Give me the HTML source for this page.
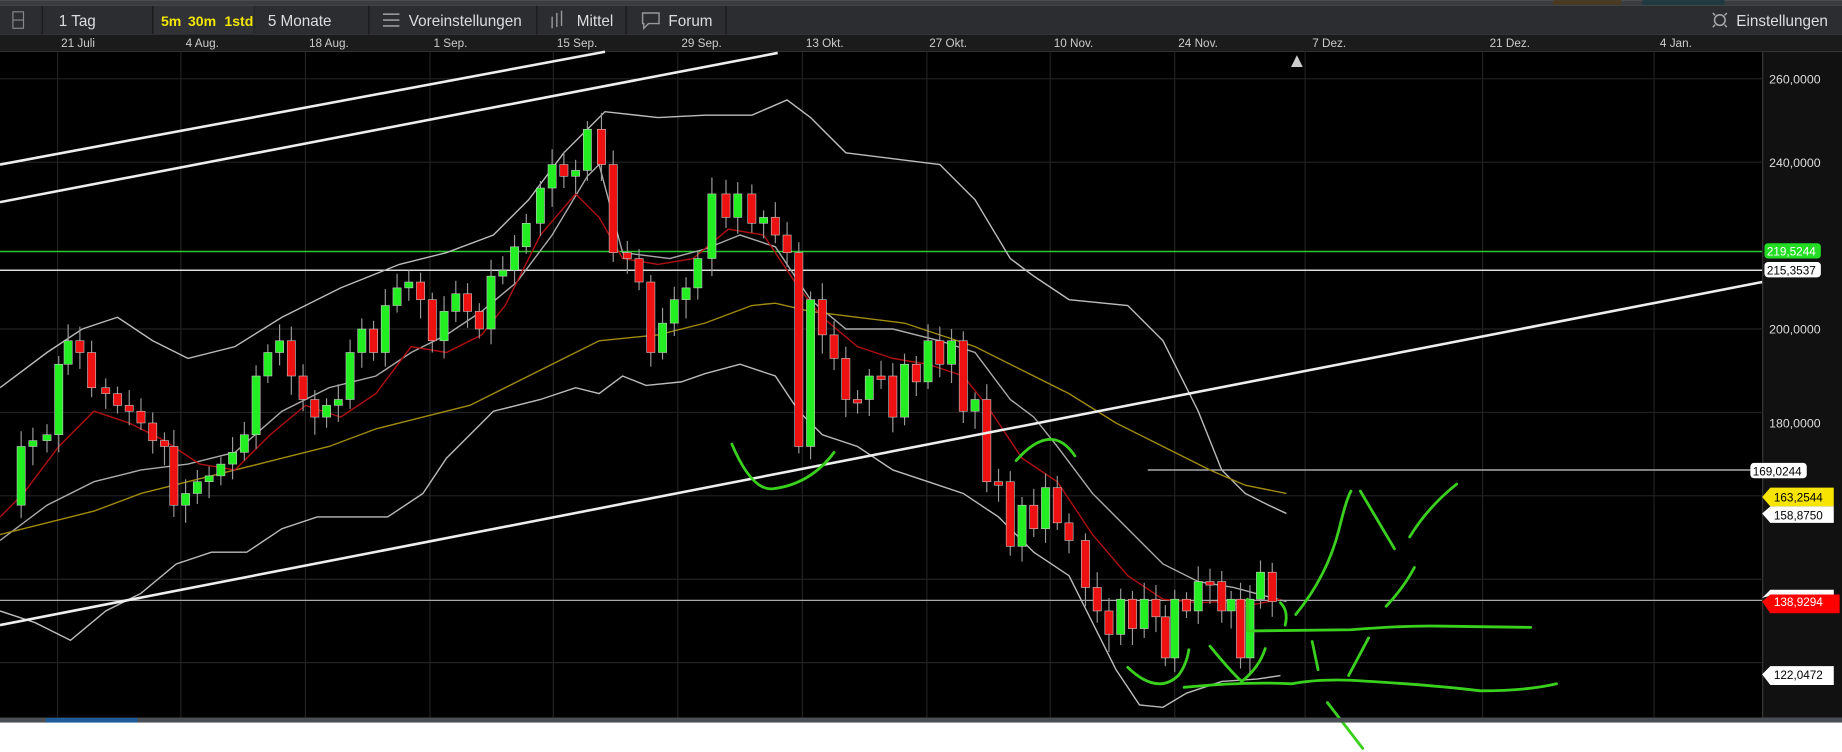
<!DOCTYPE html>
<html><head><meta charset="utf-8">
<style>
html,body{margin:0;padding:0;background:#fff;overflow:hidden}
svg{display:block}
text{font-family:"Liberation Sans Narrow","Liberation Sans",sans-serif}
</style></head><body>
<svg id="s" width="1842" height="752" viewBox="0 0 1568 640" xmlns="http://www.w3.org/2000/svg">
<rect x="0" y="0" width="1568" height="640" fill="#fff"/>
<!-- top strip -->
<rect x="0" y="0" width="1568" height="5" fill="#3a3d40"/>
<rect x="1322" y="0" width="58" height="4" fill="#4a3a22"/>
<rect x="1398" y="0" width="70" height="4" fill="#1e3a40"/>
<!-- toolbar -->
<rect x="0" y="5" width="1568" height="24" fill="#2b2d30"/>
<g stroke="#1a1a1a" stroke-width="1">
<line x1="36" y1="5" x2="36" y2="29"/><line x1="130" y1="5" x2="130" y2="29"/><line x1="216" y1="5" x2="216" y2="29"/>
<line x1="314" y1="5" x2="314" y2="29"/><line x1="457" y1="5" x2="457" y2="29"/><line x1="533" y1="5" x2="533" y2="29"/><line x1="618" y1="5" x2="618" y2="29"/>
</g>
<rect x="131" y="5" width="85" height="24" fill="#303235"/>
<g fill="none" stroke="#888" stroke-width="1"><rect x="11" y="10" width="9" height="14"/><line x1="11" y1="17" x2="20" y2="17"/></g>
<text x="50" y="22" fill="#ddd" font-size="13">1 Tag</text>
<text x="137" y="22" fill="#f2e600" font-size="12" font-weight="bold">5m</text>
<text x="160" y="22" fill="#f2e600" font-size="12" font-weight="bold">30m</text>
<text x="191" y="22" fill="#f2e600" font-size="12" font-weight="bold">1std</text>
<text x="228" y="22" fill="#ddd" font-size="13">5 Monate</text>
<g stroke="#999" stroke-width="1.3"><line x1="326" y1="12" x2="340" y2="12"/><line x1="326" y1="17" x2="340" y2="17"/><line x1="326" y1="22" x2="340" y2="22"/></g>
<text x="348" y="22" fill="#ddd" font-size="13">Voreinstellungen</text>
<g stroke="#999" stroke-width="1.2"><line x1="470" y1="14" x2="470" y2="24"/><line x1="474" y1="11" x2="474" y2="23"/><line x1="478" y1="9" x2="478" y2="22"/></g>
<text x="491" y="22" fill="#ddd" font-size="13">Mittel</text>
<path d="M547 11h14v9h-9l-4 4v-4h-1z" fill="none" stroke="#999" stroke-width="1.2"/>
<text x="569" y="22" fill="#ddd" font-size="13">Forum</text>
<circle cx="1464" cy="17" r="4.5" fill="none" stroke="#aaa" stroke-width="1.3"/>
<g stroke="#aaa" stroke-width="1.2"><line x1="1458" y1="11" x2="1460" y2="13"/><line x1="1470" y1="11" x2="1468" y2="13"/><line x1="1458" y1="23" x2="1460" y2="21"/><line x1="1470" y1="23" x2="1468" y2="21"/></g>
<text x="1478" y="22" fill="#ddd" font-size="13">Einstellungen</text>
<!-- date axis -->
<rect x="0" y="29" width="1568" height="15" fill="#1b1b1b"/>
<g fill="#ccc" font-size="10">
<text x="52" y="40">21 Juli</text><text x="158" y="40">4 Aug.</text><text x="263" y="40">18 Aug.</text><text x="369" y="40">1 Sep.</text>
<text x="474" y="40">15 Sep.</text><text x="580" y="40">29 Sep.</text><text x="686" y="40">13 Okt.</text><text x="791" y="40">27 Okt.</text>
<text x="897" y="40">10 Nov.</text><text x="1003" y="40">24 Nov.</text><text x="1117" y="40">7 Dez.</text><text x="1268" y="40">21 Dez.</text><text x="1413" y="40">4 Jan.</text>
</g>
<!-- chart area -->
<rect x="0" y="44" width="1500" height="567" fill="#000"/>
<rect x="1500" y="44" width="68" height="567" fill="#111"/>
<line x1="1500.5" y1="44" x2="1500.5" y2="611" stroke="#333"/>
<g stroke="#222" stroke-width="1">
<line x1="49" y1="44" x2="49" y2="611"/><line x1="154" y1="44" x2="154" y2="611"/><line x1="260" y1="44" x2="260" y2="611"/><line x1="366" y1="44" x2="366" y2="611"/>
<line x1="471" y1="44" x2="471" y2="611"/><line x1="577" y1="44" x2="577" y2="611"/><line x1="683" y1="44" x2="683" y2="611"/><line x1="789" y1="44" x2="789" y2="611"/>
<line x1="894" y1="44" x2="894" y2="611"/><line x1="1000" y1="44" x2="1000" y2="611"/><line x1="1111" y1="44" x2="1111" y2="611"/><line x1="1262" y1="44" x2="1262" y2="611"/><line x1="1408" y1="44" x2="1408" y2="611"/>
<line x1="0" y1="67" x2="1500" y2="67"/><line x1="0" y1="138" x2="1500" y2="138"/><line x1="0" y1="280" x2="1500" y2="280"/>
<line x1="0" y1="351" x2="1500" y2="351"/><line x1="0" y1="422" x2="1500" y2="422"/><line x1="0" y1="493" x2="1500" y2="493"/><line x1="0" y1="564" x2="1500" y2="564"/>
</g>
<path d="M1099 57l5-10 5 10z" fill="#ccc"/>
<!-- horizontal levels -->
<line x1="0" y1="214" x2="1500" y2="214" stroke="#2ec82e" stroke-width="1.3"/>
<line x1="0" y1="230" x2="1500" y2="230" stroke="#ddd" stroke-width="1.3"/>
<line x1="977" y1="400" x2="1500" y2="400" stroke="#ccc" stroke-width="1"/>
<line x1="0" y1="511" x2="1500" y2="511" stroke="#aaa" stroke-width="1"/>
<!-- indicators -->
<g fill="none" stroke-width="1.2">
<polyline stroke="#bbb" points="0,330 40,300 70,280 100,270 130,290 160,305 200,295 240,270 290,245 340,225 380,215 420,200 450,170 480,130 500,110 515,95 560,100 600,98 640,98 670,85 690,100 720,130 760,135 800,140 830,170 860,220 880,235 910,255 960,260 990,290 1020,350 1040,400 1060,420 1080,430 1095,437"/>
<polyline stroke="#bbb" points="0,520 30,530 60,545 90,520 120,505 150,480 180,470 210,470 240,450 270,440 300,440 330,440 360,420 380,390 400,370 420,350 460,340 490,330 510,335 530,320 550,328 580,325 600,318 630,310 660,320 680,350 700,370 730,380 760,400 790,410 820,420 850,440 880,470 910,490 930,530 950,570 970,600 990,602 1010,590 1040,580 1070,578 1090,575"/>
<polyline stroke="#aaa" points="0,460 40,430 80,410 120,400 160,395 200,385 240,350 280,330 320,320 350,300 380,285 410,265 440,240 470,200 500,150 510,140 530,215 570,220 600,212 630,200 660,210 690,255 720,280 760,280 800,290 830,300 860,340 880,355 900,380 930,420 960,450 990,480 1020,495 1050,500 1095,512"/>
<polyline stroke="#a08a10" points="0,455 40,445 80,435 120,420 160,410 200,400 240,390 280,380 320,365 360,355 400,345 440,325 480,305 510,290 560,285 600,275 640,260 660,258 690,265 730,270 770,275 800,285 830,295 870,315 910,335 950,360 990,380 1030,400 1060,413 1095,420"/>
<polyline stroke="#b01010" points="0,440 20,420 50,380 80,350 110,360 140,375 170,395 200,400 230,370 260,345 290,355 320,335 350,295 380,300 410,285 430,260 460,200 490,165 510,185 530,220 560,225 590,220 620,195 650,200 680,245 700,270 730,295 760,305 790,310 820,320 840,345 870,390 900,410 930,455 960,490 990,510 1020,513 1040,512 1060,516 1080,512 1090,510"/>
</g>
<g id="candles"></g>
<!-- trend lines -->
<g stroke="#eee" stroke-width="2.2">
<line x1="0" y1="140" x2="515" y2="44"/><line x1="0" y1="172" x2="662" y2="45"/><line x1="0" y1="532" x2="1500" y2="240"/>
</g>
<!-- green drawings -->
<g fill="none" stroke="#3ad11e" stroke-width="2.4" stroke-linecap="round">
<path d="M623 378Q640 418 658 416Q690 412 710 385"/>
<path d="M865 392Q895 358 915 388"/>
<path d="M960 568Q985 592 1003 575Q1010 566 1012 553"/>
<path d="M1030 550Q1048 572 1057 580Q1072 568 1077 552"/>
<path d="M1062 537L1150 536Q1200 532 1230 533L1303 534"/>
<path d="M1062 510L1062 537"/>
<path d="M1008 585Q1060 580 1100 582Q1120 578 1150 579Q1220 583 1260 588Q1300 588 1325 582"/>
<path d="M1103 523Q1130 490 1140 450Q1146 425 1150 418"/>
<path d="M1158 418L1187 467"/>
<path d="M1200 457Q1215 432 1240 412"/>
<path d="M1180 516Q1195 500 1204 483"/>
<path d="M1090 513Q1097 520 1094 532"/>
<path d="M1117 546L1122 570"/>
<path d="M1165 543L1148 575"/>
<path d="M1130 598L1160 637"/>
</g>
<!-- right axis labels -->
<g fill="#ddd" font-size="10.5" font-family="Liberation Sans,sans-serif">
<text x="1506" y="71" style="font-family:'Liberation Sans',sans-serif">260,0000</text>
<text x="1506" y="142" style="font-family:'Liberation Sans',sans-serif">240,0000</text>
<text x="1506" y="284" style="font-family:'Liberation Sans',sans-serif">200,0000</text>
<text x="1506" y="364" style="font-family:'Liberation Sans',sans-serif">180,0000</text>
</g>
<g font-size="10" style="font-family:'Liberation Sans',sans-serif">
<rect x="1502" y="207" width="48" height="13" rx="3" fill="#22dd22"/><text x="1504" y="217.5" fill="#fff" style="font-family:'Liberation Sans',sans-serif">219,5244</text>
<rect x="1502" y="223" width="48" height="13" rx="3" fill="#fff"/><text x="1504" y="233.5" fill="#000" style="font-family:'Liberation Sans',sans-serif">215,3537</text>
<rect x="1490" y="394" width="48" height="13" rx="3" fill="#fff"/><text x="1492" y="404.5" fill="#000" style="font-family:'Liberation Sans',sans-serif">169,0244</text>
<path d="M1500 423l7-8h54v16h-54z" fill="#f7e400"/><text x="1510" y="427" fill="#000" style="font-family:'Liberation Sans',sans-serif">163,2544</text>
<path d="M1500 437l7-6h54v14h-54z" fill="#fff"/><text x="1510" y="442" fill="#000" style="font-family:'Liberation Sans',sans-serif">158,8750</text>
<path d="M1500 509l7-7h54v5h-54z" fill="#fff"/>
<path d="M1500 512l7-6h59v16h-59z" fill="#f00"/><text x="1510" y="516" fill="#fff" style="font-family:'Liberation Sans',sans-serif">138,9294</text>
<path d="M1500 574l7-7h54v16h-54z" fill="#fff"/><text x="1510" y="578" fill="#000" style="font-family:'Liberation Sans',sans-serif">122,0472</text>
</g>
<!-- scrollbar -->
<rect x="0" y="611" width="1568" height="4" fill="#4a4f55"/>
<rect x="39" y="611" width="78" height="4" fill="#1f5a9a"/>
</svg>
<script>
(function(){
var pts=[[8,430],[18,380],[28,375],[40,370],[50,310],[58,290],[68,300],[78,330],[90,335],[100,345],[110,350],[120,360],[130,375],[140,380],[148,430],[158,420],[168,410],[178,405],[188,395],[198,385],[208,370],[218,320],[228,300],[238,290],[248,320],[258,340],[268,355],[278,345],[288,340],[298,300],[308,280],[318,300],[328,260],[338,245],[348,240],[358,255],[368,290],[378,265],[388,250],[398,265],[408,280],[418,235],[428,230],[438,210],[448,190],[460,160],[470,140],[480,150],[490,145],[500,110],[512,140],[522,215],[534,220],[544,240],[554,300],[564,275],[574,255],[584,245],[594,220],[606,165],[618,185],[628,165],[640,190],[650,185],[660,200],[670,215],[680,380],[690,255],[700,285],[710,305],[720,340],[730,340],[740,320],[750,320],[760,355],[770,310],[780,325],[790,290],[800,310],[810,290],[820,350],[830,340],[840,410],[850,410],[860,465],[870,430],[880,450],[890,415],[900,445],[910,460],[924,500],[934,520],[944,540],[954,510],[964,535],[974,510],[984,525],[992,560],[1000,510],[1010,520],[1020,495],[1030,495],[1040,520],[1048,510],[1056,560],[1064,510],[1073,487],[1083,512]];
var g=document.getElementById('candles'),ns='http://www.w3.org/2000/svg',h='';
for(var i=1;i<pts.length;i++){var x=pts[i][0],c=pts[i][1],o=pts[i-1][1];
var up=c<o,top=Math.min(o,c),bot=Math.max(o,c);if(bot-top<3)bot=top+3;
var col=up?'#22ee22':'#ee1111';
var wt=top-6-(i*7%9),wb=bot+6+(i*5%11);
h+='<line x1="'+x+'" y1="'+wt+'" x2="'+x+'" y2="'+wb+'" stroke="#999" stroke-width="1"/>';
h+='<rect x="'+(x-3.5)+'" y="'+top+'" width="7" height="'+(bot-top)+'" fill="'+col+'" stroke="#ccc" stroke-width="0.5"/>';}
g.innerHTML=h;})();
</script>
</body></html>
